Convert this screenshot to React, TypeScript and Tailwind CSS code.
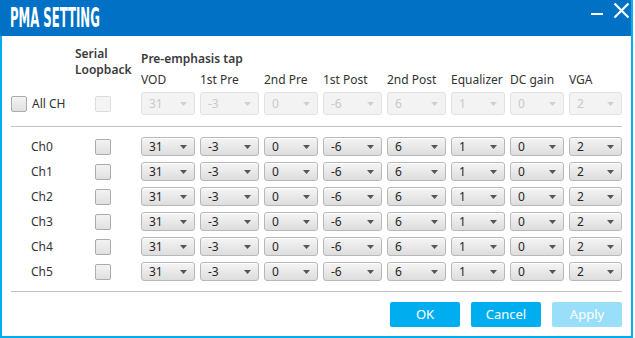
import React from "react";

const cols = [
  { name: "VOD", w: "w-[54px]", v: "31" },
  { name: "1st Pre", w: "w-[59px]", v: "-3" },
  { name: "2nd Pre", w: "w-[54px]", v: "0" },
  { name: "1st Post", w: "w-[59px]", v: "-6" },
  { name: "2nd Post", w: "w-[59px]", v: "6" },
  { name: "Equalizer", w: "w-[54px]", v: "1" },
  { name: "DC gain", w: "w-[54px]", v: "0" },
  { name: "VGA", w: "w-[53px]", v: "2" },
];

function Combo({ v, w, disabled }: { v: string; w: string; disabled?: boolean }) {
  if (disabled) {
    return (
      <div
        className={`${w} h-[23px] flex items-center justify-between pl-[7px] pr-[7px] rounded-[3px] border border-[#e2e2e2] bg-[#f3f3f3] text-[#c9c9c9]`}
      >
        <span>{v}</span>
        <svg width="7" height="4" viewBox="0 0 7 4">
          <path d="M0 0H7L3.5 4Z" fill="#d0d0d0" />
        </svg>
      </div>
    );
  }
  return (
    <div
      className={`${w} h-[19px] flex items-center justify-between pl-[7px] pr-[7px] rounded-[3px] border border-[#b8b8b8] bg-gradient-to-b from-[#f5f5f5] to-[#dddddd] text-[#262626] shadow-[inset_0_1px_0_#ffffff]`}
    >
      <span>{v}</span>
      <svg width="7" height="4" viewBox="0 0 7 4">
        <path d="M0 0H7L3.5 4Z" fill="#555555" />
      </svg>
    </div>
  );
}

function Check({ disabled }: { disabled?: boolean }) {
  return disabled ? (
    <div className="w-[16px] h-[16px] rounded-[2px] border border-[#dcdcdc] bg-[#f4f4f4]" />
  ) : (
    <div className="w-[16px] h-[16px] rounded-[2px] border border-[#ababab] bg-gradient-to-b from-[#f3f3f3] to-[#e0e0e0]" />
  );
}

export default function App() {
  const font = { fontFamily: '"Noto Sans", "Open Sans", sans-serif' };
  return (
    <div className="w-[635px] h-[338px] bg-white">
      <div className="w-[633px] h-[338px] flex flex-col">
        {/* Title bar */}
        <div className="h-[36px] bg-[#0071c5] border-r-2 border-[#00aeef] flex items-start justify-between">
          <div
            className="mt-[3px] ml-[10px] text-white font-bold text-[26px] leading-[30px] origin-left scale-x-[0.5] whitespace-nowrap"
            style={{ fontFamily: '"DejaVu Sans Condensed", "DejaVu Sans", sans-serif' }}
          >
            PMA SETTING
          </div>
          <div className="flex items-start mr-[1px]">
            <svg width="14" height="4" viewBox="0 0 14 4" className="mt-[12px] mr-[9px]">
              <rect x="1" y="1" width="12" height="2" fill="#ffffff" />
            </svg>
            <svg width="17" height="17" viewBox="0 0 17 17" className="mt-[2px]">
              <path d="M1.5 1.5L15.5 15.5M15.5 1.5L1.5 15.5" stroke="#ffffff" strokeWidth="2.2" />
            </svg>
          </div>
        </div>
        {/* Body */}
        <div
          className="flex-1 border-l-2 border-r-2 border-b-2 border-[#00aeef] pl-[9px] pr-[9px] text-[12px] text-[#333333]"
          style={font}
        >
          {/* Header */}
          <div className="h-[56px] flex items-start">
            <div className="w-[64px]" />
            <div className="w-[66px] mt-[10px] font-semibold leading-[16px] text-[#3a3a3a]">
              <div>Serial</div>
              <div>Loopback</div>
            </div>
            <div className="mt-[15px]">
              <div className="font-semibold leading-[16px] text-[#3a3a3a]">Pre-emphasis tap</div>
              <div className="mt-[5px] flex gap-[5px] leading-[16px]">
                {cols.map((c) => (
                  <div key={c.name} className={`${c.w} whitespace-nowrap`}>
                    {c.name}
                  </div>
                ))}
              </div>
            </div>
          </div>
          {/* All CH row */}
          <div className="h-[23px] flex items-center">
            <div className="w-[84px] flex items-center gap-[5px]">
              <Check />
              <span className="text-[#333333]">All CH</span>
            </div>
            <div className="w-[46px] flex items-center">
              <Check disabled />
            </div>
            <div className="flex gap-[5px]">
              {cols.map((c) => (
                <Combo key={c.name} v={c.v} w={c.w} disabled />
              ))}
            </div>
          </div>
          <div className="mt-[11px] h-px bg-[#c3c3c3]" />
          {/* Channel rows */}
          <div className="mt-[10px] flex flex-col gap-[6px]">
            {[0, 1, 2, 3, 4, 5].map((i) => (
              <div key={i} className="h-[19px] flex items-center">
                <div className="w-[84px] pl-[20px]">Ch{i}</div>
                <div className="w-[46px] flex items-center">
                  <Check />
                </div>
                <div className="flex gap-[5px]">
                  {cols.map((c) => (
                    <Combo key={c.name} v={c.v} w={c.w} />
                  ))}
                </div>
              </div>
            ))}
          </div>
          <div className="mt-[10px] h-px bg-[#c3c3c3]" />
          {/* Buttons */}
          <div className="mt-[10px] flex justify-end gap-[11px]">
            <div className="w-[70px] h-[25px] rounded-[2px] bg-[#00aeef] text-white text-[13px] flex items-center justify-center">
              OK
            </div>
            <div className="w-[70px] h-[25px] rounded-[2px] bg-[#00aeef] text-white text-[13px] flex items-center justify-center">
              Cancel
            </div>
            <div className="w-[70px] h-[25px] rounded-[2px] bg-[#9adff9] text-white text-[13px] flex items-center justify-center">
              Apply
            </div>
          </div>
        </div>
      </div>
    </div>
  );
}
